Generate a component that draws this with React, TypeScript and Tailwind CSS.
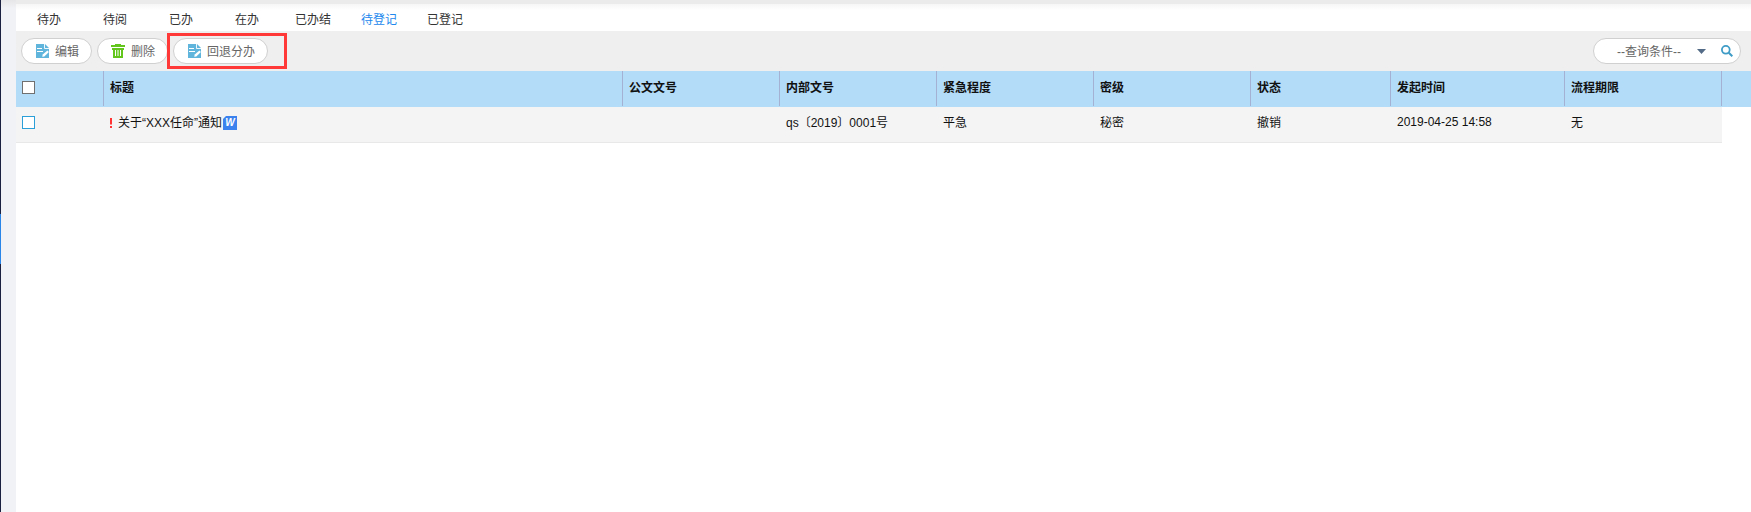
import React from "react";

const tabs = ["待办", "待阅", "已办", "在办", "已办结", "待登记", "已登记"];
const columns = ["标题", "公文文号", "内部文号", "紧急程度", "密级", "状态", "发起时间", "流程期限"];
const grid =
  "grid grid-cols-[88px_519px_157px_157px_157px_157px_140px_174px_157px_1fr]";

function EditIcon() {
  return (
    <svg width="14" height="14" viewBox="0 0 14 14" className="shrink-0">
      <path fill="#5fb5dc" d="M0 0h9l4 4v10H0z" />
      <path d="M8.500 0v4.500H13" fill="none" stroke="#fff" strokeWidth="0.900" />
      <path d="M1 4.500h5M1 7.500h6" stroke="#fff" strokeWidth="1" />
      <path d="M6.200 12.800l.5-2.200 4.700-4.200 1.500 1.600-4.600 4.400z" fill="#fff" />
    </svg>
  );
}

function TrashIcon() {
  return (
    <svg width="14" height="14" viewBox="0 0 14 14" className="-ml-px mr-px shrink-0">
      <path fill="#63c61c" d="M4 0h6v1h4v2H0V1h4z" />
      <path
        fill="#63c61c"
        fillRule="evenodd"
        d="M1 4h12v2h-1v8H2V6H1zM4 6v6h1V6zM6.500 6v6h1V6zM9 6v6h1V6z"
      />
    </svg>
  );
}

function Pill({ icon, label, width }: { icon: React.ReactNode; label: string; width: string }) {
  return (
    <button
      className={`flex h-[26px] items-center gap-[5px] rounded-full border border-[#d0d0d0] bg-white pl-[14px] text-[#666] ${width}`}
    >
      {icon}
      <span className="pt-[2px] whitespace-nowrap">{label}</span>
    </button>
  );
}

export default function App() {
  return (
    <div className="flex h-[512px] w-[1751px] overflow-hidden bg-white font-['Liberation_Sans','Noto_Sans_CJK_SC',sans-serif] text-[12px] leading-[18px] text-[#111]">
      <aside className="flex w-4 shrink-0 bg-[#f1f2f5]">
        <div className="flex w-px flex-col bg-[#1a2040] pt-[214px]">
          <div className="h-[50px] bg-[#2a85e8]" />
        </div>
        <div className="h-2 flex-1 bg-linear-to-b from-[#e6e6e8] to-[#f1f2f5]" />
      </aside>
      <main className="min-w-0 flex-1">
        <div className="h-1 bg-[#ebebeb]" />
        <nav className="flex h-[27px] bg-linear-to-b from-[#f6f6f6] to-white to-[6px] pt-[7px] text-[#333]">
          {tabs.map((t) => (
            <a key={t} className={`w-[66px] text-center ${t === "待登记" ? "text-[#2288ee]" : ""}`}>
              {t}
            </a>
          ))}
        </nav>
        <div className="relative flex h-10 items-center gap-[5px] bg-[#efefef] pr-[10px] pl-[5px]">
          <Pill icon={<EditIcon />} label="编辑" width="w-[71px]" />
          <Pill icon={<TrashIcon />} label="删除" width="w-[71px]" />
          <Pill icon={<EditIcon />} label="回退分办" width="w-[95px]" />
          <div className="absolute top-[2px] left-[151px] h-9 w-[120px] border-3 border-[#ff3838]" />
          <div className="ml-auto flex h-[26px] w-[148px] items-center rounded-full border border-[#d0d0d0] bg-white pl-[23px] text-[#666]">
            <span className="w-[80px] pt-[2px] whitespace-nowrap">--查询条件--</span>
            <svg width="9" height="5" viewBox="0 0 9 5">
              <path d="M0 0h9L4.500 5z" fill="#536b86" />
            </svg>
            <svg className="ml-[15px]" width="12" height="12" viewBox="0 0 12 12">
              <circle cx="4.800" cy="4.800" r="3.900" fill="none" stroke="#3f9cc6" strokeWidth="1.800" />
              <path d="M7.800 7.800l3.500 3.500" stroke="#3f9cc6" strokeWidth="2" />
            </svg>
          </div>
        </div>
        <div className={`${grid} h-9 bg-[#b3dcf9] pb-px font-bold`}>
          <div className="border-r border-[#a5b1d3] pt-[10px] pl-[6px]">
            <div className="size-[13px] border border-[#707070] bg-white" />
          </div>
          {columns.map((c) => (
            <div key={c} className="border-r border-[#a5b1d3] pt-[8px] pl-[6px]">
              {c}
            </div>
          ))}
        </div>
        <div className={`${grid} h-9 w-[1706px] border-b border-[#e8e8e8] bg-[#f4f4f4] pt-[7px]`}>
          <div className="pt-[2px] pl-[6px]">
            <div className="size-[13px] border border-[#2a9fd8] bg-white" />
          </div>
          <div className="flex pl-[6px]">
            <svg className="mt-1 mr-[6px]" width="2" height="10" viewBox="0 0 2 10">
              <path d="M0 0h2v6.500H0zM0 8h2v2H0z" fill="#f33" />
            </svg>
            <span className="whitespace-nowrap">关于“XXX任命”通知</span>
            <span className="mt-[2px] ml-px flex size-[14px] items-center justify-center bg-[#3b82ee] text-[10px] leading-none font-bold text-white italic [clip-path:polygon(3px_0,100%_0,100%_100%,0_100%,0_3px)]">
              W
            </span>
          </div>
          <div />
          <div className="pl-[6px]">qs〔2019〕0001号</div>
          <div className="pl-[6px]">平急</div>
          <div className="pl-[6px]">秘密</div>
          <div className="pl-[6px]">撤销</div>
          <div className="-mt-px pl-[6px]">2019-04-25 14:58</div>
          <div className="pl-[6px]">无</div>
        </div>
      </main>
    </div>
  );
}
